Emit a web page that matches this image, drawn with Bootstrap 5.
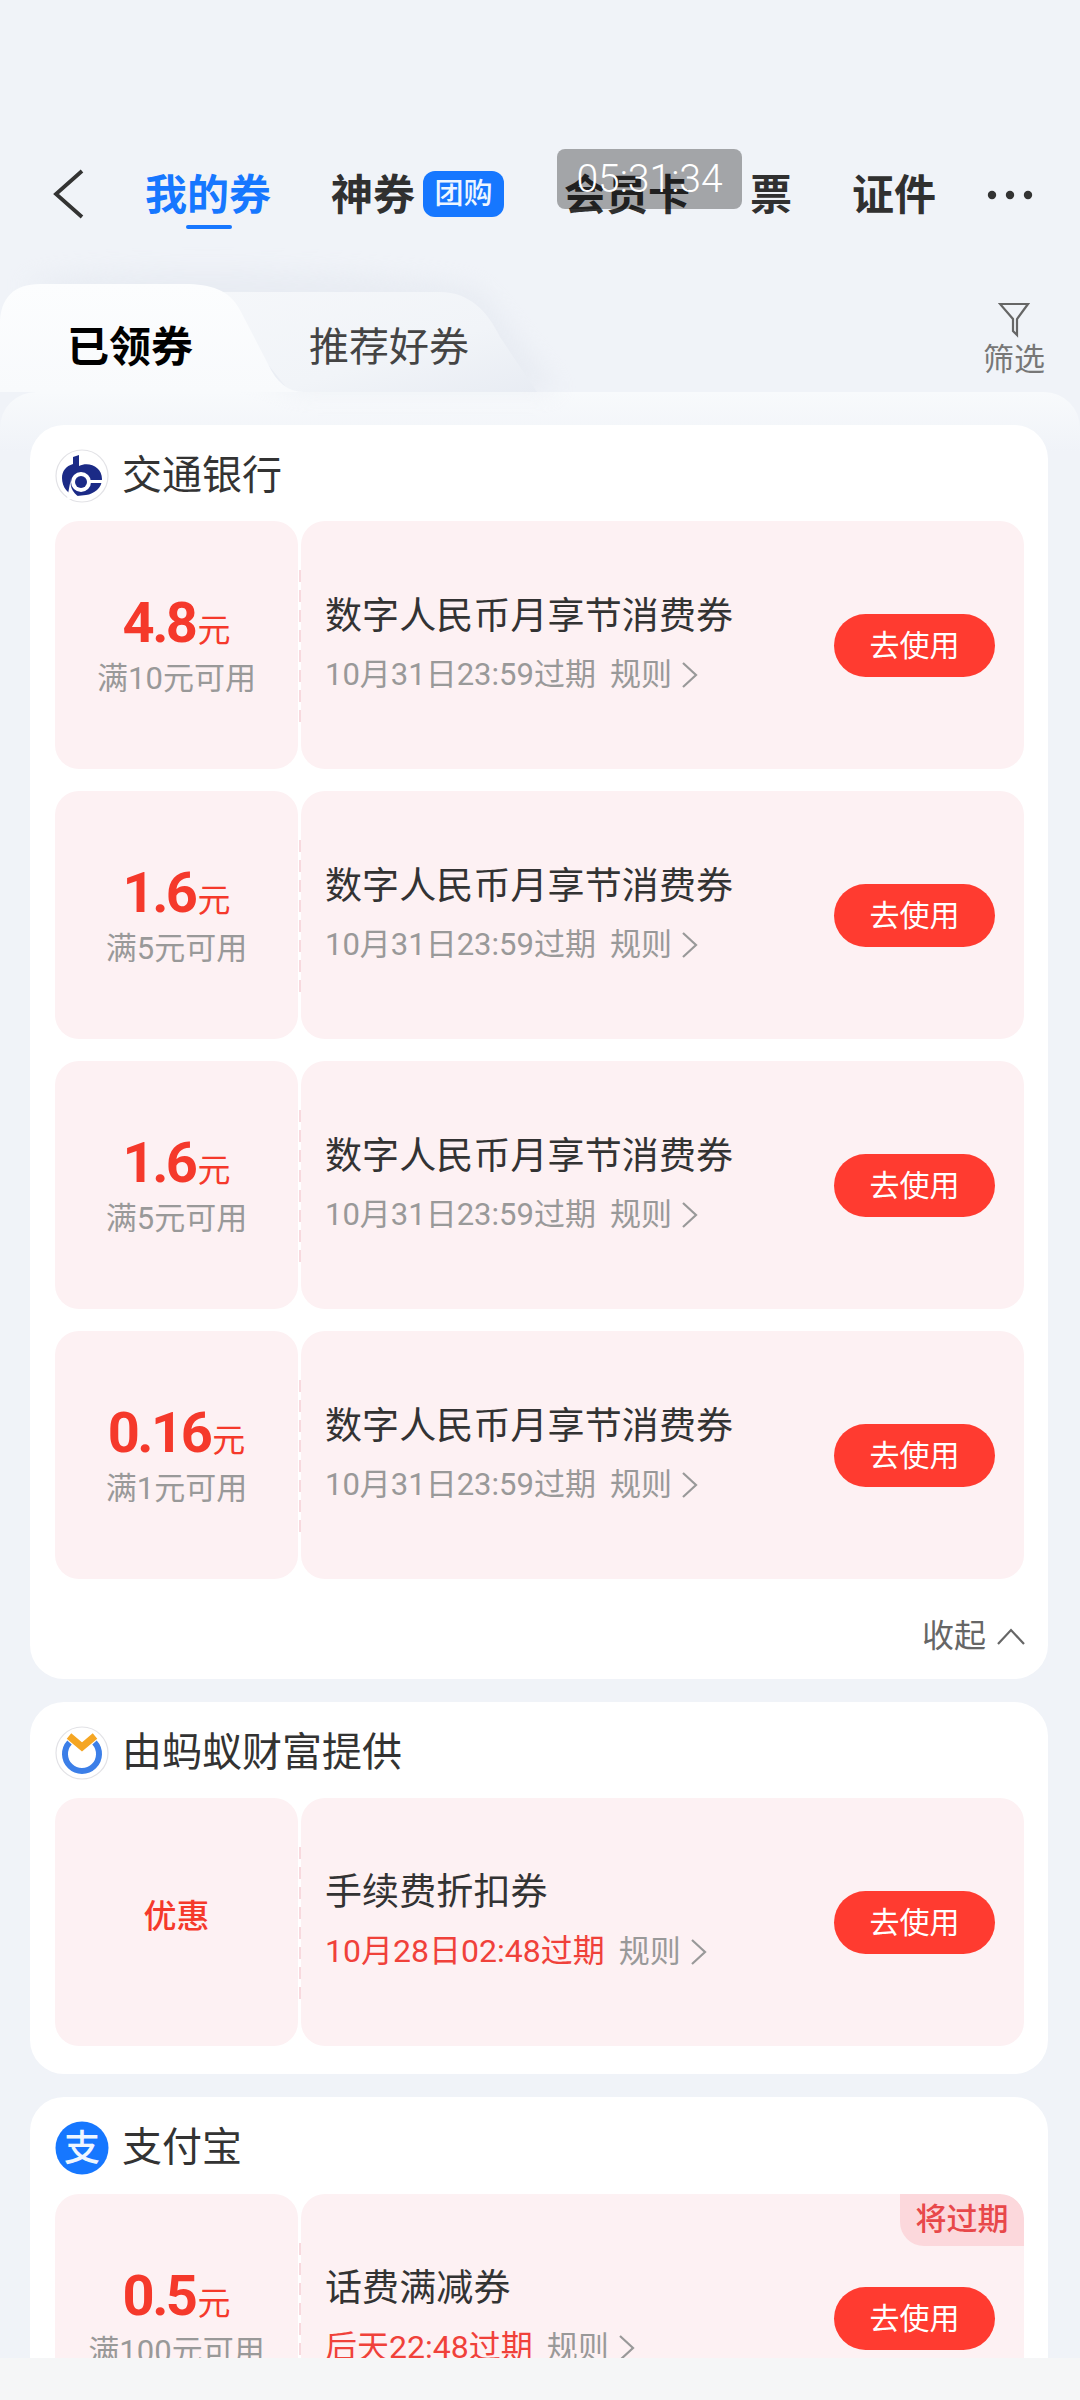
<!DOCTYPE html>
<html lang="zh-CN">
<head>
<meta charset="utf-8">
<title>我的券</title>
<link rel="stylesheet" href="https://cdn.jsdelivr.net/npm/bootstrap@5.3.0/dist/css/bootstrap.min.css">
<style>
html,body{margin:0;width:1080px;height:2400px;overflow:hidden;background:#f5f6f7;}
body{font-family:Roboto,"Noto Sans CJK SC",sans-serif;color:#333;}
.app{width:1080px;height:2400px;}
.stage{height:2358px;background:#f0f3f8;}
.foot-strip{height:42px;background:#f5f6f7;}
.topnav{padding:173px 0 0 53px;height:284px;align-items:flex-start;gap:60px;}
.topnav-item{font-size:42px;line-height:46px;font-weight:700;color:#303030;white-space:nowrap;}
.topnav-item.on{color:#1677ff;position:relative;}
.topnav-item.on::after{content:"";position:absolute;left:41px;top:52px;width:46px;height:4px;border-radius:2px;background:#1677ff;}
.back-ic{width:31px;height:50px;margin-top:-4px;margin-right:1px;}
.tuan{display:inline-block;width:81px;height:46px;margin-left:8px;margin-top:-2px;border-radius:12px;background:#1677ff;color:#eef6ff;font-size:29px;line-height:46px;font-weight:500;text-align:center;vertical-align:top;}
.more-ic{width:46px;height:10px;margin-top:17px;margin-left:-9px;}
.clock{position:absolute;left:557px;top:149px;width:185px;height:60px;border-radius:8px;background:rgba(0,0,0,.32);color:#fff;font-size:39px;font-weight:300;line-height:60px;text-align:center;}
.tabbar{height:108px;}
.tab-shape{position:absolute;left:0;top:0;width:1080px;height:108px;overflow:visible;}
.tab-a{position:absolute;left:67px;top:37px;font-size:42px;line-height:54px;font-weight:700;color:#000;}
.tab-b{position:absolute;left:309px;top:37px;font-size:40px;line-height:54px;font-weight:400;color:#444;}
.filter{position:absolute;left:982px;top:18px;width:64px;color:#777;font-size:31px;line-height:38px;text-align:center;}
.filter svg{display:block;width:32px;height:36px;margin:0 auto 3px;}
.sheet{padding:33px 32px 0 30px;gap:23px;background:linear-gradient(180deg,#f8fafc 0,#f0f3f8 60px);border-radius:36px 36px 0 0;}
.coupon-card{border:0;border-radius:34px;background:#fff;padding:24px 24px 0 25px;}
.merchant{height:54px;margin-bottom:18px;gap:13px;font-size:40px;line-height:54px;color:#333;}
.merchant.wide{margin-bottom:19px;}
.merchant svg{width:54px;height:54px;flex:none;}
.ticket-list{gap:22px;}
.ticket{height:248px;gap:3px;}
.stub{width:243px;flex:none;background:#fdf1f3;border-radius:24px;padding-top:2px;position:relative;z-index:1;}
.stub::after{content:"";position:absolute;right:-3px;top:49px;height:157px;width:2px;background:repeating-linear-gradient(180deg,#f8d9de 0,#f8d9de 12px,transparent 12px,transparent 20px);}
.amount{font-size:56px;line-height:58px;font-weight:700;color:#f5392b;letter-spacing:-2.5px;white-space:nowrap;}
.amount span{font-size:33px;font-weight:400;letter-spacing:0;margin-left:2px;}
.need{font-size:31px;line-height:38px;color:#999;white-space:nowrap;}
.perk{font-size:33px;font-weight:500;color:#f5392b;margin-bottom:13px;}
.body-pane{background:#fdf1f3;border-radius:24px;padding:0 29px 0 24px;position:relative;overflow:hidden;}
.t-name{font-size:37px;line-height:50px;color:#333;white-space:nowrap;letter-spacing:.1px;margin-top:-3px;}
.t-meta{font-size:31px;line-height:42px;color:#999;margin-top:12px;white-space:nowrap;}
.t-meta svg{width:18px;height:28px;margin-left:9px;vertical-align:-4px;}
.t-meta .rule{margin-left:14px;}
.t-meta .warn{color:#f0413a;font-size:32px;}
.use-btn{width:161px;height:63px;padding:0;border:0;border-radius:32px;background:#ff3b30;color:#fff;font-size:30px;line-height:63px;flex:none;}
.use-btn:hover{background:#ff3b30;color:#fff;}
.soon{position:absolute;right:0;top:0;width:124px;height:52px;border-radius:0 24px 0 24px;background:#fcd8dc;color:#e8484a;font-size:31px;line-height:52px;font-weight:500;text-align:center;}
.fold{height:100px;padding:36px 0 0;gap:10px;justify-content:flex-end;font-size:32px;line-height:42px;color:#666;margin-right:-2px;}
.fold svg{width:30px;height:20px;margin-top:11px;}
.tail{height:28px;}
</style>
</head>
<body>
<div class="app d-flex flex-column">
  <div class="stage position-relative overflow-hidden">
    <nav class="topnav d-flex">
      <svg class="back-ic" viewBox="0 0 31 50"><path d="M29 2 3 25l26 23" fill="none" stroke="#333" stroke-width="3.8"/></svg>
      <div class="topnav-item on">我的券</div>
      <div class="topnav-item">神券<span class="tuan">团购</span></div>
      <div class="topnav-item">会员卡</div>
      <div class="topnav-item">票</div>
      <div class="topnav-item">证件</div>
      <svg class="more-ic" viewBox="0 0 46 10"><circle cx="5" cy="5" r="4.2" fill="#333"/><circle cx="23" cy="5" r="4.2" fill="#333"/><circle cx="41" cy="5" r="4.2" fill="#333"/></svg>
    </nav>
    <div class="clock">05:31:34</div>
    <div class="tabbar position-relative">
      <svg class="tab-shape" viewBox="0 0 1080 108">
        <defs>
          <linearGradient id="ga" x1="0" y1="0" x2="0" y2="1"><stop offset="0" stop-color="#fcfdfe"/><stop offset="1" stop-color="#f8fafc"/></linearGradient>
          <linearGradient id="gb" x1="0" y1="0" x2="1" y2="1"><stop offset="0" stop-color="#f5f7fa"/><stop offset=".6" stop-color="#f1f4f8"/><stop offset="1" stop-color="#e8ecf3"/></linearGradient>
          <filter id="fs" x="-30%" y="-50%" width="160%" height="200%"><feGaussianBlur stdDeviation="12"/></filter>
        </defs>
        <path d="M20 0C60 -20 420 -16 480 6L560 108H300Z" fill="#dde2eb" opacity=".4" filter="url(#fs)"/>
        <path d="M210 8H440C470 8 488 28 500 53L537 108H290Z" fill="url(#gb)"/>
        <path d="M0 108V40C0 14 14 0 40 0H185C210 0 230 6 240 26L268 80C276 98 288 108 304 108Z" fill="url(#ga)"/>
      </svg>
      <div class="tab-a">已领券</div>
      <div class="tab-b">推荐好券</div>
      <div class="filter"><svg viewBox="0 0 32 36"><path d="M2 2h28L19 17v16l-4-4V17Z" fill="none" stroke="#666" stroke-width="2.2"/></svg>筛选</div>
    </div>
    <div class="sheet d-flex flex-column">

      <section class="card coupon-card">
        <div class="merchant d-flex align-items-center">
          <svg viewBox="0 0 54 54"><circle cx="27" cy="27" r="26" fill="#fff" stroke="#e2e2e6" stroke-width="1.2"/><path d="M18 8 24 6V17C34 12 47 18 47 30 47 39 39 45 31 46L22 47C13 46 7 38 7 29 7 22 11 17 18 15Z" fill="#1b2a86"/><circle cx="26" cy="33" r="10" fill="#fff"/><path d="M16 29C14 39 19 46 28 50H12Z" fill="#fff"/><rect x="30" y="31" width="18" height="3" fill="#fff"/><circle cx="26" cy="33" r="6" fill="#1b2a86"/></svg>
          <span>交通银行</span>
        </div>
        <div class="ticket-list d-flex flex-column">
          <div class="ticket d-flex">
            <div class="stub d-flex flex-column align-items-center justify-content-center"><div class="amount">4.8<span>元</span></div><div class="need">满10元可用</div></div>
            <div class="body-pane flex-grow-1 d-flex align-items-center justify-content-between">
              <div><div class="t-name">数字人民币月享节消费券</div><div class="t-meta">10月31日23:59过期<span class="rule">规则</span><svg viewBox="0 0 18 28"><path d="M2 2l13 12L2 26" fill="none" stroke="#999" stroke-width="2.2"/></svg></div></div>
              <button class="btn use-btn" type="button">去使用</button>
            </div>
          </div>
          <div class="ticket d-flex">
            <div class="stub d-flex flex-column align-items-center justify-content-center"><div class="amount">1.6<span>元</span></div><div class="need">满5元可用</div></div>
            <div class="body-pane flex-grow-1 d-flex align-items-center justify-content-between">
              <div><div class="t-name">数字人民币月享节消费券</div><div class="t-meta">10月31日23:59过期<span class="rule">规则</span><svg viewBox="0 0 18 28"><path d="M2 2l13 12L2 26" fill="none" stroke="#999" stroke-width="2.2"/></svg></div></div>
              <button class="btn use-btn" type="button">去使用</button>
            </div>
          </div>
          <div class="ticket d-flex">
            <div class="stub d-flex flex-column align-items-center justify-content-center"><div class="amount">1.6<span>元</span></div><div class="need">满5元可用</div></div>
            <div class="body-pane flex-grow-1 d-flex align-items-center justify-content-between">
              <div><div class="t-name">数字人民币月享节消费券</div><div class="t-meta">10月31日23:59过期<span class="rule">规则</span><svg viewBox="0 0 18 28"><path d="M2 2l13 12L2 26" fill="none" stroke="#999" stroke-width="2.2"/></svg></div></div>
              <button class="btn use-btn" type="button">去使用</button>
            </div>
          </div>
          <div class="ticket d-flex">
            <div class="stub d-flex flex-column align-items-center justify-content-center"><div class="amount">0.16<span>元</span></div><div class="need">满1元可用</div></div>
            <div class="body-pane flex-grow-1 d-flex align-items-center justify-content-between">
              <div><div class="t-name">数字人民币月享节消费券</div><div class="t-meta">10月31日23:59过期<span class="rule">规则</span><svg viewBox="0 0 18 28"><path d="M2 2l13 12L2 26" fill="none" stroke="#999" stroke-width="2.2"/></svg></div></div>
              <button class="btn use-btn" type="button">去使用</button>
            </div>
          </div>
        </div>
        <div class="fold d-flex"><span>收起</span><svg viewBox="0 0 30 20"><path d="M2 18 15 4l13 14" fill="none" stroke="#666" stroke-width="2.2"/></svg></div>
      </section>

      <section class="card coupon-card">
        <div class="merchant d-flex align-items-center">
          <svg viewBox="0 0 54 54"><circle cx="27" cy="27" r="26" fill="#fff" stroke="#e2e2e6" stroke-width="1.2"/><path d="M39.500 16.500A17 17 0 1 1 14.500 16.500" fill="none" stroke="#3c7fe8" stroke-width="6"/><path d="M14 10 27 21 40 10" fill="none" stroke="#f5a623" stroke-width="7"/></svg>
          <span>由蚂蚁财富提供</span>
        </div>
        <div class="ticket d-flex">
          <div class="stub d-flex flex-column align-items-center justify-content-center"><div class="perk">优惠</div></div>
          <div class="body-pane flex-grow-1 d-flex align-items-center justify-content-between">
            <div><div class="t-name">手续费折扣券</div><div class="t-meta"><span class="warn">10月28日02:48过期</span><span class="rule">规则</span><svg viewBox="0 0 18 28"><path d="M2 2l13 12L2 26" fill="none" stroke="#999" stroke-width="2.2"/></svg></div></div>
            <button class="btn use-btn" type="button">去使用</button>
          </div>
        </div>
        <div class="tail"></div>
      </section>

      <section class="card coupon-card">
        <div class="merchant wide d-flex align-items-center">
          <svg viewBox="0 0 54 54"><circle cx="27" cy="27" r="26.500" fill="#1677ff"/><text x="27" y="40" text-anchor="middle" font-size="36" font-weight="500" fill="#eef6ff" font-family="Noto Sans CJK SC">支</text></svg>
          <span>支付宝</span>
        </div>
        <div class="ticket d-flex">
          <div class="stub d-flex flex-column align-items-center justify-content-center"><div class="amount">0.5<span>元</span></div><div class="need">满100元可用</div></div>
          <div class="body-pane flex-grow-1 d-flex align-items-center justify-content-between">
            <div class="soon">将过期</div>
            <div><div class="t-name">话费满减券</div><div class="t-meta"><span class="warn">后天22:48过期</span><span class="rule">规则</span><svg viewBox="0 0 18 28"><path d="M2 2l13 12L2 26" fill="none" stroke="#999" stroke-width="2.2"/></svg></div></div>
            <button class="btn use-btn" type="button">去使用</button>
          </div>
        </div>
      </section>

    </div>
  </div>
  <div class="foot-strip"></div>
</div>
<script src="https://cdn.jsdelivr.net/npm/bootstrap@5.3.0/dist/js/bootstrap.bundle.min.js"></script>
</body>
</html>
